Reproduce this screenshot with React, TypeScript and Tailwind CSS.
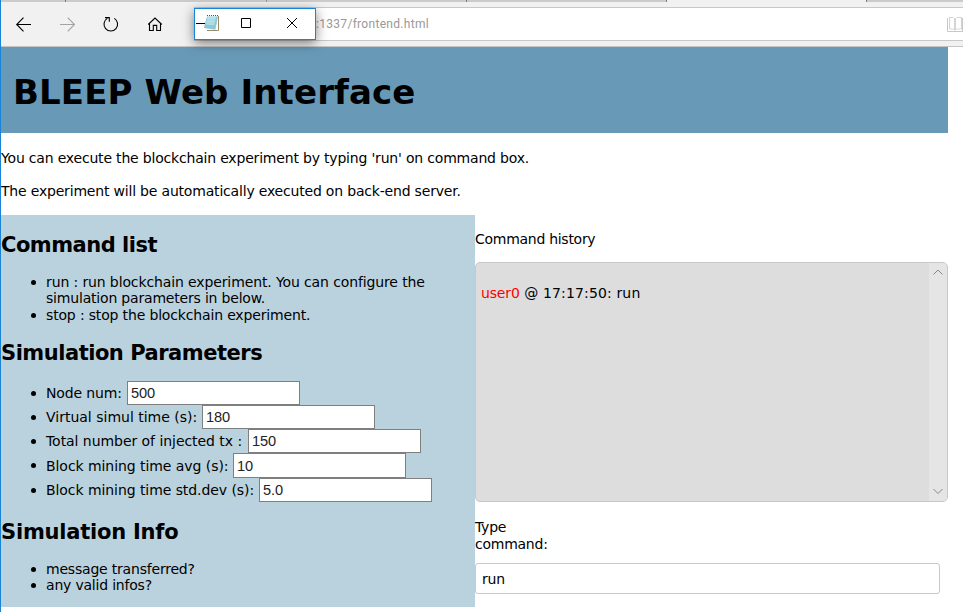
import React from 'react';

function Heading({ children, className }: { children: React.ReactNode; className: string }) {
  return <h2 className={`h-[26px] whitespace-nowrap text-[21px] leading-[28px] font-bold ${className}`}>{children}</h2>;
}

function Item({ children, row = 'h-4 leading-4 tracking-[-0.2px]' }: { children: React.ReactNode; row?: string }) {
  return (
    <li className={`flex items-center whitespace-nowrap ${row}`}>
      <span className="mr-[10px] ml-[30px] size-[5px] shrink-0 rounded-full bg-black" />
      {children}
    </li>
  );
}

const params = [
  { label: 'Node num:', value: '500', width: 'w-[81px] tracking-[-0.15px]', row: 'h-6 leading-6' },
  { label: 'Virtual simul time (s):', value: '180', width: 'w-[156px]', row: 'h-6 leading-[25px]' },
  { label: 'Total number of injected tx :', value: '150', width: 'w-[202px] tracking-[-0.05px]', row: 'h-6 leading-[25px]' },
  { label: 'Block mining time avg (s):', value: '10', width: 'w-[187px] tracking-[-0.06px]', row: 'h-[25px] leading-6' },
  { label: 'Block mining time std.dev (s):', value: '5.0', width: 'w-[213px] tracking-[-0.07px]', row: 'h-6 leading-6' },
];

function Toolbar() {
  return (
    <div className="relative h-[47px] border-b border-[#c4c4c4] bg-[#f1f1f1]">
      <div className="flex h-[2px] bg-[#cbcbcb]">
        <div className="w-[65px] border-r border-[#777]" />
        <div className="w-[201px] border-r border-[#999]" />
        <div className="w-[200px] border-r border-[#777]" />
        <div className="w-[200px] border-r border-[#777]" />
        <div className="w-[200px] border-r border-[#777] bg-[#f1f1f1]" />
      </div>
      <div className="flex h-11 items-center">
        <svg className="h-11 w-[193px] shrink-0" viewBox="1 2 193 44" fill="none" stroke="#000" strokeWidth="1.1">
          <path d="M16.5 24.5H31M23.5 17.7 16.7 24.5l6.8 6.8" />
          <path stroke="#a3a3a3" d="M60 24.5h14.5M67.7 17.7l6.8 6.8-6.8 6.8" />
          <path d="M107.3 18.4a6.8 6.8 0 1 0 7 0M105 17.6h4.3v4.2" />
          <path d="M148.2 24.5l6.8-6.5 6.8 6.5M149.5 23.4v7.1h3.8v-5.1h3.4v5.1h3.8v-7.1" />
        </svg>
        <div className="flex h-[34px] flex-1 items-center border-y border-l border-[#c8c8c8] bg-white">
          <span className="ml-[121px] font-['Roboto',sans-serif] text-[12px] leading-4 tracking-[0.3px] text-[#999]">:1337/frontend.html</span>
          <svg className="ml-auto h-[17px] w-4" viewBox="947 16 16 17" fill="none" stroke="#c8c8c8">
            <path d="M947.5 18v13.5h15.5M962.5 18v13" />
            <path stroke="#d4d4d4" d="M949.5 17.5h4M956.5 17.5h5M949.5 17v12h4l1.5 1.5 1.5-1.5h5V17M954.5 18v12M955.5 18v12" />
          </svg>
        </div>
      </div>
      <div className="absolute top-2 left-[193px] h-8 w-[122px] border border-[#1883d7] bg-white shadow-[0_3px_12px_rgba(0,0,0,0.5)]">
        <svg className="block h-[30px] w-[120px]" viewBox="195 9 120 30" fill="none">
          <path d="M218.5 16v14.5H207" stroke="#9c8a68" />
          <path d="M207 16.5h11l-2.6 13.3L203.8 28z" fill="#8bc8d8" />
          <path d="M207.5 17h8.5l-2 8-8-.5z" fill="#b7e1e9" />
          <path d="M206.5 20h10.5M206 23h10.5M205 26h11" stroke="#93cbd9" strokeWidth=".5" />
          <path d="M207 15.5h11" stroke="#365e69" strokeDasharray="1 1" />
          <path d="M196 23.5h9M241.5 18.5h9v9h-9zM287 18l10 10M297 18l-10 10" stroke="#000" />
        </svg>
      </div>
    </div>
  );
}

export default function App() {
  return (
    <div className="h-[612px] w-[963px] overflow-hidden border-l border-[#1883d7] bg-white font-['DejaVu_Sans',sans-serif] text-[14px] leading-4 tracking-normal text-black">
      <Toolbar />
      <header className="h-[86px] w-[947px] bg-[#689ab8] pt-[25px] pl-3">
        <h1 className="text-[34px] leading-10 font-bold tracking-[0.12px] whitespace-nowrap">BLEEP Web Interface</h1>
      </header>
      <p className="mt-[17px] tracking-[-0.19px] whitespace-nowrap">You can execute the blockchain experiment by typing 'run' on command box.</p>
      <p className="mt-[17px] tracking-[-0.19px] whitespace-nowrap">The experiment will be automatically executed on back-end server.</p>
      <main className="mt-4 flex w-[947px]">
        <section className="h-[392px] w-[474px] bg-[#bad2de] pt-4">
          <Heading className="tracking-[-0.5px]">Command list</Heading>
          <ul className="mt-[17px]">
            <Item row="h-4 leading-4 tracking-[-0.12px]">run : run blockchain experiment. You can configure the</Item>
            <li className="h-[17px] pl-[45px] tracking-[-0.19px] whitespace-nowrap">simulation parameters in below.</li>
            <Item row="h-4 leading-4 tracking-[-0.16px]">stop : stop the blockchain experiment.</Item>
          </ul>
          <Heading className="mt-4 tracking-[-0.48px]">Simulation Parameters</Heading>
          <ul className="mt-4">
            {params.map((p) => (
              <Item key={p.label} row={p.row}>
                <label className={`shrink-0 ${p.width}`}>{p.label}</label>
                <input
                  className="h-full w-[173px] border border-[#7f7f7f] bg-white px-[3px] font-['Liberation_Sans',sans-serif] text-[14.6px] leading-5 tracking-[-0.1px] text-[#222]"
                  defaultValue={p.value}
                />
              </Item>
            ))}
          </ul>
          <Heading className="mt-4 tracking-[-0.22px]">Simulation Info</Heading>
          <ul className="mt-[17px]">
            <Item>message transferred?</Item>
            <Item>any valid infos?</Item>
          </ul>
        </section>
        <section className="w-[473px] pt-4">
          <h3 className="tracking-[-0.28px]">Command history</h3>
          <div className="mt-[15px] flex h-60 overflow-hidden rounded-[5px] border border-[#c8c8c8] bg-[#ddd]">
            <p className="flex-1 pt-[22px] pl-[5px] tracking-[0.14px]">
              <span className="tracking-[-0.15px] text-[#f00]">user0</span> @ 17:17:50: run
            </p>
            <div className="flex w-[18px] flex-col items-center justify-between bg-[#e5e5e5] py-[6px]">
              <svg className="h-[7px] w-3" viewBox="0 0 12 7" fill="none" stroke="#888"><path d="M1.5 5.5 6 1l4.5 4.5" /></svg>
              <svg className="h-[7px] w-3" viewBox="0 0 12 7" fill="none" stroke="#888"><path d="M1.5 1 6 5.5 10.5 1" /></svg>
            </div>
          </div>
          <label className="mt-[17px] block leading-[17px] tracking-[-0.25px]">Type<br />command:</label>
          <input
            className="mt-[10px] block h-[31px] w-[465px] rounded-[3px] border border-[#c8c8c8] bg-white px-[6px] tracking-[-0.2px]"
            defaultValue="run"
          />
        </section>
      </main>
    </div>
  );
}
